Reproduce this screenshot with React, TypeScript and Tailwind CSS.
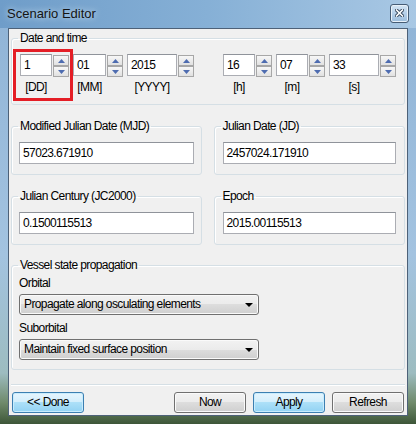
import React from 'react'

const ui = "font-['Liberation_Sans',Arial,sans-serif] text-[12px] tracking-[-0.6px] text-black whitespace-nowrap"

function SpinArrow({ up }: { up?: boolean }) {
  return (
    <div className="h-[11px] w-[16px] border border-[#a7a7a7] bg-[linear-gradient(180deg,#f7f7f7,#e1e1e1)] flex items-center justify-center">
      <svg width="7" height="4" viewBox="0 0 7 4">
        {up ? <path d="M0 4 L3.5 0 L7 4 Z" fill="#4e6cb0" /> : <path d="M0 0 L3.5 4 L7 0 Z" fill="#4e6cb0" />}
      </svg>
    </div>
  )
}

function Spin({ value, label, w, ml }: { value: string; label: string; w: string; ml: string }) {
  return (
    <div className={`flex flex-col ${ml}`}>
      <div className="flex items-start gap-[1px]">
        <div className={`${w} h-[22px] bg-white border border-[#abadb3] border-t-[#8f939a] pl-[3px] leading-[20px]`}>{value}</div>
        <div className="flex flex-col pt-[1px]">
          <SpinArrow up />
          <SpinArrow />
        </div>
      </div>
      <div className={`${w} text-center leading-[14px] mt-[3px]`}>{label}</div>
    </div>
  )
}

function Group({ title, className, children }: { title: string; className: string; children?: React.ReactNode }) {
  return (
    <fieldset className={`border border-[#d5dfe5] rounded-[3px] shadow-[inset_1px_1px_0_#fff] ${className}`}>
      <legend className="ml-[6px] px-[2px] leading-[16px]">{title}</legend>
      {children}
    </fieldset>
  )
}

function TextBox({ value }: { value: string }) {
  return (
    <div className="h-[22px] bg-white border border-[#abadb3] border-t-[#8f939a] pl-[3px] leading-[20px]">{value}</div>
  )
}

function Combo({ value }: { value: string }) {
  return (
    <div className="w-[240px] h-[21px] rounded-[3px] border border-[#707070] bg-[linear-gradient(180deg,#f2f2f2_0%,#ebebeb_50%,#dddddd_50%,#cfcfcf_100%)] flex items-center justify-between pl-[4px] pr-[5px] shadow-[inset_0_0_0_1px_#fafafa]">
      <span className="leading-[19px]">{value}</span>
      <svg width="8" height="4" viewBox="0 0 8 4"><path d="M0 0 L8 0 L4 4 Z" fill="#000" /></svg>
    </div>
  )
}

function Button({ text, primary }: { text: string; primary?: boolean }) {
  return (
    <div
      className={`w-[72px] h-[21px] rounded-[3px] border flex items-center justify-center leading-[19px] ${
        primary
          ? 'border-[#3c7fb1] bg-[linear-gradient(180deg,#e6f5fd_0%,#d2eefc_50%,#ade0f8_50%,#92d2f3_100%)] shadow-[inset_0_0_0_1px_#c8ecfd]'
          : 'border-[#707070] bg-[linear-gradient(180deg,#f2f2f2_0%,#ebebeb_50%,#dddddd_50%,#cfcfcf_100%)] shadow-[inset_0_0_0_1px_#fafafa]'
      }`}
    >
      {text}
    </div>
  )
}

export default function App() {
  return (
    <div className="w-[416px] h-[424px] overflow-hidden flex flex-col bg-[linear-gradient(180deg,#8fb3d6_0%,#a3c3e0_60%,#9dbcc0_88%,#6f8a6a_95%,#3d5638_100%)]">
      {/* Title bar */}
      <div className="h-[28px] flex items-center justify-between pl-[7px] pr-[7px] bg-[linear-gradient(90deg,#6f9dc9_0%,#86b0d6_50%,#a9c8e4_100%)]">
        <span className="font-['Liberation_Sans',Arial,sans-serif] text-[13px] text-[#141414] [text-shadow:0_0_6px_#dfeefa]">Scenario Editor</span>
        <div className="w-[19px] h-[19px] mb-[2px] rounded-[3px] border border-[#465c75] bg-[linear-gradient(180deg,#d6e6f4_0%,#b5cfe8_50%,#9cbddc_100%)] flex items-center justify-center shadow-[inset_0_0_0_1px_#e8f1f9]">
          <svg width="9" height="8" viewBox="0 0 9 8">
            <path d="M1.5 1 L7.5 7 M7.5 1 L1.5 7" stroke="#33465c" strokeWidth="3.4" strokeLinecap="square" />
            <path d="M1.5 1 L7.5 7 M7.5 1 L1.5 7" stroke="#fff" strokeWidth="1.6" strokeLinecap="square" />
          </svg>
        </div>
      </div>

      {/* Client area */}
      <div className={`mx-[8px] h-[388px] bg-[#f0f0f0] border border-[#4d6178] flex flex-col ${ui}`}>
        <Group title="Date and time" className="relative mx-[2px] mt-[1px] h-[75px]">
          <div className="flex items-start pt-[8px] pl-[8px]">
            <Spin value="1" label="[DD]" w="w-[32px]" ml="ml-0" />
            <Spin value="01" label="[MM]" w="w-[33px]" ml="ml-[4px]" />
            <Spin value="2015" label="[YYYY]" w="w-[50px]" ml="ml-[4px]" />
            <Spin value="16" label="[h]" w="w-[32px]" ml="ml-[29px]" />
            <Spin value="07" label="[m]" w="w-[32px]" ml="ml-[4px]" />
            <Spin value="33" label="[s]" w="w-[50px]" ml="ml-[4px]" />
          </div>
          <div className="absolute left-[1px] top-[3px] w-[60px] h-[52px] border-[3px] border-[#e41e26]" />
        </Group>

        <div className="flex gap-[12px] mx-[2px] mt-[13px]">
          <Group title="Modified Julian Date (MJD)" className="w-[191px] h-[57px]">
            <div className="px-[7px] pt-[8px]"><TextBox value="57023.671910" /></div>
          </Group>
          <Group title="Julian Date (JD)" className="w-[192px] h-[57px]">
            <div className="px-[8px] pt-[8px]"><TextBox value="2457024.171910" /></div>
          </Group>
        </div>

        <div className="flex gap-[12px] mx-[2px] mt-[13px]">
          <Group title="Julian Century (JC2000)" className="w-[191px] h-[57px]">
            <div className="px-[7px] pt-[8px]"><TextBox value="0.1500115513" /></div>
          </Group>
          <Group title="Epoch" className="w-[192px] h-[57px]">
            <div className="px-[8px] pt-[8px]"><TextBox value="2015.00115513" /></div>
          </Group>
        </div>

        <Group title="Vessel state propagation" className="mx-[2px] mt-[12px] h-[113px]">
          <div className="pl-[7px]">
            <div className="pt-[3px] leading-[14px]">Orbital</div>
            <div className="mt-[4px]"><Combo value="Propagate along osculating elements" /></div>
            <div className="mt-[6px] leading-[14px]">Suborbital</div>
            <div className="mt-[4px]"><Combo value="Maintain fixed surface position" /></div>
          </div>
        </Group>

        <div className="mx-[2px] mt-[14px] h-[2px] border-t border-[#d5dfe5] border-b border-b-white" />

        <div className="flex items-center mx-[3px] mt-[6px]">
          <Button text="<< Done" primary />
          <div className="flex-1" />
          <div className="flex gap-[7px]">
            <Button text="Now" />
            <Button text="Apply" primary />
            <Button text="Refresh" />
          </div>
        </div>
      </div>
    </div>
  )
}
